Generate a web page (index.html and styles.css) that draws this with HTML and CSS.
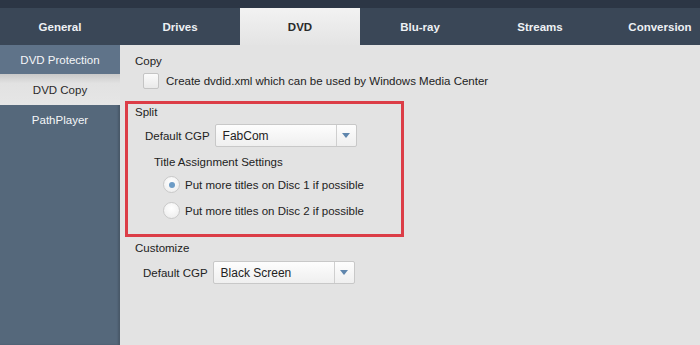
FILE: index.html
```html
<!DOCTYPE html>
<html lang="en">
<head>
    <meta charset="UTF-8">
    <title>Settings - DVD Copy</title>
    <link rel="stylesheet" href="styles.css">
</head>
<body>
    <div class="topbar"></div>
    <div class="tabs">
        <div class="tab">General</div>
        <div class="tab">Drives</div>
        <div class="tab active">DVD</div>
        <div class="tab">Blu-ray</div>
        <div class="tab">Streams</div>
        <div class="tab">Conversion</div>
    </div>

    <div class="main">
        <div class="sidebar">
            <div class="side-item hover">DVD Protection</div>
            <div class="side-item active">DVD Copy</div>
            <div class="side-item">PathPlayer</div>
        </div>

        <div class="content">
            <div class="group-title">Copy</div>
            <div class="check-row">
                <span class="checkbox"></span>
                <span>Create dvdid.xml which can be used by Windows Media Center</span>
            </div>

            <div class="split-box">
                <div class="group-title">Split</div>
                <div class="field-row">
                    <span class="field-label">Default CGP</span>
                    <div class="select">
                        <span class="select-value">FabCom</span>
                        <span class="select-arrow"></span>
                    </div>
                </div>
                <div class="sub-title">Title Assignment Settings</div>
                <div class="radio-row">
                    <span class="radio checked"></span>
                    <span>Put more titles on Disc 1 if possible</span>
                </div>
                <div class="radio-row">
                    <span class="radio"></span>
                    <span>Put more titles on Disc 2 if possible</span>
                </div>
            </div>

            <div class="group-title customize">Customize</div>
            <div class="field-row small">
                <span class="field-label">Default CGP</span>
                <div class="select">
                    <span class="select-value">Black Screen</span>
                    <span class="select-arrow"></span>
                </div>
            </div>
        </div>
    </div>
</body>
</html>
```

FILE: styles.css
```css
body {
    margin: 0;
    width: 700px;
    height: 345px;
    overflow: hidden;
    font-family: "Liberation Sans", Arial, sans-serif;
    font-size: 11.5px;
    color: #222;
    background: #e3e3e3;
}
.topbar {
    height: 8px;
    background: #2c3645;
}
.tabs {
    display: flex;
    height: 37px;
    background: #3a4757;
    overflow: hidden;
}
.tab {
    flex: 0 0 120px;
    display: flex;
    align-items: center;
    justify-content: center;
    font-size: 11.5px;
    font-weight: bold;
    color: #eef1f4;
}
.tab.active {
    background: linear-gradient(#f2f2f2, #e4e4e4);
    color: #2a2a2a;
}

.main {
    display: flex;
    height: 300px;
}
.sidebar {
    width: 120px;
    flex: none;
    background: #55687b;
    box-shadow: inset -2px 0 2px rgba(0, 0, 0, 0.15);
}
.side-item {
    height: 29px;
    display: flex;
    align-items: center;
    justify-content: center;
    font-size: 11.5px;
    color: #f4f6f8;
}
.side-item.hover {
    background: #5f7389;
}
.side-item.active {
    height: 31px;
    background: linear-gradient(#c9c9c9, #e2e2e2 30%, #e6e6e6);
    color: #2a2a2a;
}

.content {
    flex: 1;
    padding: 9px 0 0 5px;
}
.group-title {
    padding-left: 10px;
    line-height: 14px;
}
.check-row {
    display: flex;
    align-items: center;
    gap: 7px;
    margin: 5px 0 0 18px;
    height: 16px;
}
.checkbox {
    width: 14px;
    height: 14px;
    border: 1px solid #c4c4c4;
    border-radius: 2px;
    background: linear-gradient(#fbfbfb, #e9e9e9);
}

.split-box {
    width: 279px;
    box-sizing: border-box;
    margin-top: 12px;
    padding: 1px 0 15px 0;
    border: 3px solid #dc3d47;
}
.split-box .group-title {
    padding-left: 7px;
}
.field-row {
    display: flex;
    align-items: center;
    gap: 5px;
    height: 23px;
    margin: 5px 0 0 17px;
}
.field-row.small {
    margin: 6px 0 0 18px;
}
.select {
    display: flex;
    width: 140px;
    height: 21px;
    border: 1px solid #c8c8c8;
    border-radius: 2px;
    background: linear-gradient(#fdfdfd, #efefef);
}
.select-value {
    flex: 1;
    display: flex;
    align-items: center;
    padding-left: 7px;
    font-size: 12px;
}
.select-arrow {
    width: 19px;
    border-left: 1px solid #cfcfcf;
    display: flex;
    align-items: center;
    justify-content: center;
}
.select-arrow::after {
    content: "";
    border-left: 4px solid transparent;
    border-right: 4px solid transparent;
    border-top: 5px solid #5f86ad;
}
.sub-title {
    margin: 8px 0 0 26px;
    line-height: 14px;
}
.radio-row {
    display: flex;
    align-items: center;
    gap: 5px;
    height: 17px;
    margin: 7px 0 0 35px;
}
.radio-row + .radio-row {
    margin-top: 9px;
}
.radio {
    width: 15px;
    height: 15px;
    border: 1px solid #c9c9c9;
    border-radius: 50%;
    background: radial-gradient(circle at 50% 35%, #ffffff, #ebebeb);
    display: flex;
    align-items: center;
    justify-content: center;
}
.radio.checked::after {
    content: "";
    width: 6px;
    height: 6px;
    border-radius: 50%;
    background: #6d9cc6;
}
.customize {
    margin-top: 4px;
}
```
